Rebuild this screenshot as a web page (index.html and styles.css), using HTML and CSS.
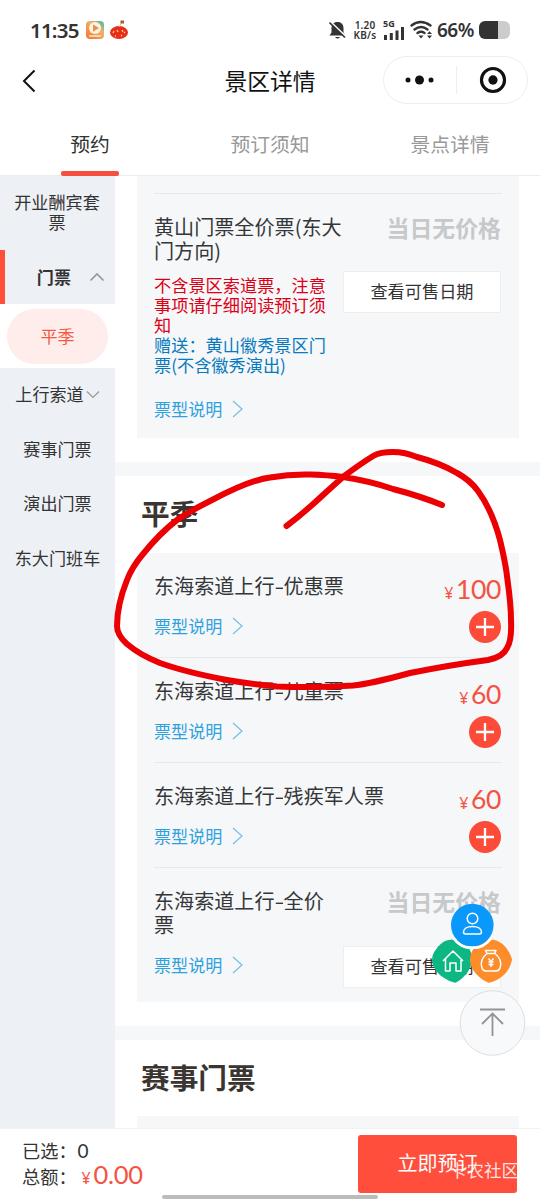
FILE: index.html
```
<!DOCTYPE html>
<html lang="zh-CN">
<head>
<meta charset="utf-8">
<title>景区详情</title>
<link rel="stylesheet" href="styles.css">
</head>
<body>
<div class="app">
  <div class="status">
    <span class="clock">11:35</span>
    <svg class="apps" width="44" height="22" viewBox="0 0 44 22">
      <defs><linearGradient id="app" x1="1" y1="0" x2="0.2" y2="1"><stop offset="0" stop-color="#35b9ad"/><stop offset=".4" stop-color="#e9b56b"/><stop offset="1" stop-color="#f47a38"/></linearGradient></defs>
      <rect x="1" y="2" width="18" height="18" rx="4" fill="url(#app)"/>
      <circle cx="10" cy="9" r="6" fill="#fff3dd"/><path d="M8 5.500l6 3.500-6 3.800z" fill="#ee8e4c"/><path d="M4 17h12" stroke="#ffe6cf" stroke-width="1.500"/>
      <ellipse cx="34" cy="13.500" rx="9" ry="6.500" fill="#e62e16"/><path d="M34 8l3-5" stroke="#f6b69a" stroke-width="1"/><rect x="35.500" y="1.500" width="3.500" height="3" fill="#b8552b"/>
      <path d="M28 14l1-2M32 11l1 2M37 11l1 2M40 14l-1-1M30 17h1M36 17l1-1" stroke="#ffc49c" stroke-width="1.300"/>
    </svg>
    <span class="grow"></span>
    <svg class="bell" width="18" height="20" viewBox="0 0 18 20"><path d="M.5 15.500h16l-2-3V8c0-3-2-5.500-4.500-6h-3C4.500 2.500 2.500 5 2.500 8v4.500zM6 17h5q-2.500 3-5 0z" fill="#333"/><path d="M1 1.500l17 16" stroke="#fff" stroke-width="1.800"/><path d="M.5 2.500l15.500 15" stroke="#333" stroke-width="1.600"/></svg>
    <span class="speed">1.20<br>KB/s</span>
    <span class="signal"><b>5G</b><svg width="21" height="13" viewBox="0 0 21 13"><path d="M2.500 8v5M8.300 6v7M14 3.500v9.500M19.500 0v13" stroke="#333" stroke-width="3"/></svg></span>
    <svg class="wifi" width="23" height="20" viewBox="0 0 23 20"><g fill="none" stroke="#333" stroke-width="2.300" stroke-linecap="round"><path d="M1.500 5.500q9-7 19 0M4.500 9.500q6.500-5 13 0M7.500 13q3.500-2.500 7 0"/></g><path d="M8.500 15.500h5L11 18.500zM17 14h5l-2.500-2.700zM17 15.500h5l-2.500 3z" fill="#333"/></svg>
    <span class="percent">66%</span>
    <span class="battery"></span>
  </div>
  <div class="nav">
    <svg class="back" width="14" height="24" viewBox="0 0 14 24"><path d="M12.500 1.500L2 12l10.500 10.500" fill="none" stroke="#111" stroke-width="2"/></svg>
    <h1 class="title">景区详情</h1>
    <div class="capsule">
      <svg width="72" height="46" viewBox="0 0 72 46"><circle cx="24" cy="23" r="2.500"/><circle cx="35.500" cy="23" r="4.500"/><circle cx="47" cy="23" r="2.500"/></svg>
      <svg class="close" width="71" height="46" viewBox="0 0 71 46"><circle cx="36.500" cy="23" r="11.700" fill="none" stroke="#111" stroke-width="3.200"/><circle cx="36.500" cy="23" r="4.700"/></svg>
    </div>
  </div>
  <div class="tabs"><div class="tab active"><span>预约</span></div><div class="tab"><span>预订须知</span></div><div class="tab"><span>景点详情</span></div></div>
  <div class="main">
    <div class="side">
      <div class="cat first">开业酬宾套票</div>
      <div class="cat current"><span>门票</span><svg width="16" height="10" viewBox="0 0 16 10"><path d="M1.500 8.500L8 2l6.500 6.500"/></svg></div>
      <div class="sub"><div class="pill">平季</div></div>
      <div class="cat row"><span>上行索道</span><svg width="14" height="9" viewBox="0 0 14 9"><path d="M1 1.500l6 6 6-6"/></svg></div>
      <div class="cat row">赛事门票</div>
      <div class="cat row">演出门票</div>
      <div class="cat row">东大门班车</div>
    </div>
    <div class="content">
      <div class="card top">
        <div class="item long">
          <div class="info"><div class="name">黄山门票全价票(东大门方向)</div>
            <div class="note"><div class="red">不含景区索道票，注意事项请仔细阅读预订须知</div><div class="blue">赠送：黄山徽秀景区门票(不含徽秀演出)</div></div>
            <div class="link">票型说明<svg width="12" height="18" viewBox="0 0 12 18"><path d="M1 1l9 8-9 8"/></svg></div></div>
          <div class="buy"><div class="none">当日无价格</div><div class="dates">查看可售日期</div></div>
        </div>
      </div>
      <div class="band"></div>
      <h2 class="heading season">平季</h2>
      <div class="card">
        <div class="item">
          <div class="info"><div class="name">东海索道上行<i>-</i>优惠票</div><div class="link">票型说明<svg width="12" height="18" viewBox="0 0 12 18"><path d="M1 1l9 8-9 8"/></svg></div></div>
          <div class="buy"><div class="price"><small>¥</small>100</div><svg class="plus" width="32" height="32" viewBox="0 0 32 32"><circle cx="16" cy="16" r="16"/><path d="M7 16h18M16 7v18"/></svg></div>
        </div>
        <div class="item">
          <div class="info"><div class="name">东海索道上行<i>-</i>儿童票</div><div class="link">票型说明<svg width="12" height="18" viewBox="0 0 12 18"><path d="M1 1l9 8-9 8"/></svg></div></div>
          <div class="buy"><div class="price"><small>¥</small>60</div><svg class="plus" width="32" height="32" viewBox="0 0 32 32"><circle cx="16" cy="16" r="16"/><path d="M7 16h18M16 7v18"/></svg></div>
        </div>
        <div class="item">
          <div class="info"><div class="name wide">东海索道上行<i>-</i>残疾军人票</div><div class="link">票型说明<svg width="12" height="18" viewBox="0 0 12 18"><path d="M1 1l9 8-9 8"/></svg></div></div>
          <div class="buy"><div class="price"><small>¥</small>60</div><svg class="plus" width="32" height="32" viewBox="0 0 32 32"><circle cx="16" cy="16" r="16"/><path d="M7 16h18M16 7v18"/></svg></div>
        </div>
        <div class="item tall">
          <div class="info"><div class="name narrow">东海索道上行<i>-</i>全价票</div><div class="link">票型说明<svg width="12" height="18" viewBox="0 0 12 18"><path d="M1 1l9 8-9 8"/></svg></div></div>
          <div class="buy"><div class="none">当日无价格</div><div class="dates">查看可售日期</div></div>
        </div>
      </div>
      <div class="band"></div>
      <h2 class="heading">赛事门票</h2>
      <div class="card rest"></div>
    </div>
  </div>
  <div class="footer">
    <div class="totals"><div>已选：<span class="count">0</span></div><div>总额：<span class="sum"><small>¥</small>0.00</span></div></div>
    <div class="book">立即预订</div>
  </div>
  <div class="homebar"></div>
  <div class="watermark">卡农社区</div>
  <svg class="float" width="110" height="160" viewBox="430 900 110 160">
    <defs><mask id="cut"><rect x="430" y="900" width="110" height="160" fill="#fff"/><circle cx="472.300" cy="925" r="21.300" fill="#000"/></mask></defs>
    <path d="M453 939.500c12 0 19 9 19 20 0 9-8 19-16 23q-1 .3-2 0c-20-6-27-23-18-33 4-6 9-10 17-10z" fill="#0cb783"/>
    <path d="M490 939.500c11 0 19 9 22 20-2 12-11 20-22 23q-1 .3-2 0c-8-3-18-13-18-22 0-11 9-21 20-21z" fill="#fd8c2a"/>
    <path d="M453.500 938a22.800 22.800 0 0 0 37.600 0" fill="none" stroke="#fff" stroke-width="3" mask="url(#cut)"/>
    <circle cx="472.300" cy="925" r="21.300" fill="#0a98fb"/>
    <g fill="none" stroke="#fff" stroke-width="1.500" stroke-linejoin="round"><circle cx="472.500" cy="918.500" r="5.300"/><path d="M463.500 932c0-3.500 4-5.500 9-5.500s9 2 9 5.500q0 2-2 2h-14q-2 0-2-2z"/>
    <path d="M443 961l10-10 10 10M445.500 958.500v12.500h4.500v-8h6v8h5v-12.500"/>
    <path d="M487 953.500l-1.500-3h10.500l-1.500 3zM487 953.500c-5 4-7 9-5 14.500q1 3 4 3h10q3 0 4-3c2-5.500 0-10.500-5-14.500"/><path d="M488.500 958.500l2.500 3 2.500-3M491 961.500v5.500M488.500 962h5M488.500 964.500h5"/></g>
    <circle cx="492.500" cy="1023" r="32.300" fill="#f8f9fb" fill-opacity=".95" stroke="#dddee1"/>
    <path d="M480 1009.500h25M492.500 1036v-22M482 1024l10.500-10.500 10.500 10.500" fill="none" stroke="#929396" stroke-width="1.800"/>
  </svg>
  <svg class="scribble" width="540" height="300" viewBox="0 430 540 300"><path d="M286.500 526Q305 512 323 495Q334 485 343 477Q360 464 374 455.500Q380 452 393 452Q405 452 417 457Q440 463 457 473Q470 480 478 491Q492 510 500 540Q506 565 507.500 580Q511 605 511 620Q512 640 507 648Q503 657 488 660Q450 665 410 673Q370 684 353 685.500Q315 688 277 686.500Q250 684 227 680Q185 672 160 663Q140 655 127 644Q117 635 117 626Q117 605 127 580Q132 567 143 554Q160 533 177 520Q190 511 212 500Q250 480 270 477.500Q290 474 310 474.500Q328 475 343 477Q370 481 393 489Q420 496 442 505" fill="none" stroke="#eb0003" stroke-width="6" stroke-linecap="round" stroke-linejoin="round"/></svg>
</div>
</body>
</html>
```
FILE: styles.css
```
* { box-sizing: border-box; }
body { margin: 0; font-family: "Noto Sans CJK SC", sans-serif; color: #333; background: #fff; }
svg { display: block; flex: none; }
.app { position: relative; width: 540px; height: 1200px; overflow: hidden; display: flex; flex-direction: column; background: #fff; }
.status { height: 56px; padding: 4px 30px 0; display: flex; align-items: center; flex: none; }
.clock { font: 600 20.5px "Noto Sans", sans-serif; width: 55px; white-space: nowrap; letter-spacing: -.8px; }
.apps { margin-top: -1px; }
.grow { flex: 1; }
.bell { margin-right: 6px; }
.speed { font: 600 10px/10px "Noto Sans", sans-serif; width: 24px; text-align: center; letter-spacing: .2px; white-space: nowrap; margin-right: 6px; }
.signal { width: 23px; margin-right: 4px; }
.signal b { display: block; font: 700 9px/8px "Noto Sans", sans-serif; }
.signal svg { margin-top: -1px; }
.wifi { margin-right: 4px; }
.percent { font: 600 19px "Noto Sans", sans-serif; width: 39px; letter-spacing: -.5px; white-space: nowrap; margin-right: 3px; }
.battery { width: 31px; height: 18px; border-radius: 6px; background: linear-gradient(90deg, #333 0 19px, #ccc 19px); }
.nav { height: 48px; display: grid; grid-template-columns: 157px 1fr 157px; align-items: center; flex: none; }
.back { margin: 1px 0 0 22px; }
.title { margin: 0; font-size: 22.8px; line-height: 46px; font-weight: 400; text-align: center; color: #111; padding-top: 1px; }
.capsule { display: flex; width: 145px; height: 48px; border: 1px solid #eee; border-radius: 24px; fill: #111; }
.close { border-left: 1px solid #eee; border-image: linear-gradient(transparent 20%, #eee 20% 80%, transparent 80%) 1; }
.tabs { display: grid; grid-template-columns: repeat(3, 1fr); height: 72px; border-bottom: 1px solid #ebecf0; flex: none; }
.tab { display: flex; flex-direction: column; align-items: center; color: #999; font-size: 19.8px; line-height: 30px; padding-top: 25px; }
.tab.active { color: #333; }
.tab.active::after { content: ""; width: 58px; height: 5px; border-radius: 2px; background: #f5503f; margin-top: 12px; }
.main { height: 952px; display: grid; grid-template-columns: 115px 1fr; overflow: hidden; flex: none; }
.side { background: #edf0f5; font-size: 17.1px; text-align: center; }
.cat { line-height: 20px; }
.cat.first { height: 74px; padding: 16px 15px 0 14px; }
.current { height: 54px; border-left: 5px solid #ff4e3c; display: flex; align-items: center; justify-content: flex-end; padding-right: 10px; gap: 18px; font-weight: 700; }
.current svg, .row svg { fill: none; stroke: #96989d; stroke-width: 1.7; }
.sub { height: 64px; background: #fff; padding: 5px 7px 4px; }
.pill { height: 55px; border-radius: 28px; background: #ffedec; color: #f15b43; line-height: 54px; }
.row { height: 54.5px; display: flex; align-items: center; justify-content: center; gap: 2px; padding-bottom: 2px; }
.row svg { stroke-width: 1.2; }
.content { overflow: hidden; }
.card { margin: 0 21px 0 22px; padding: 0 17px; background: #f6f7f9; }
.card.top { padding-top: 17px; height: 262px; }
.item { height: 105px; padding: 21px 1px 0 0; display: flex; justify-content: space-between; border-bottom: 1px solid #e6e8eb; }
.item.long { height: 245px; border-top: 1px solid #e6e8eb; border-bottom: 0; padding-top: 21px; }
.item.tall { height: 134px; border-bottom: 0; }
.info { width: 189px; }
.name { width: 192px; font-size: 20.1px; line-height: 24px; color: #353638; }
.name i { display: inline-block; font-style: normal; width: 9px; transform: scaleX(1.4); text-align: center; }
.name.wide { width: 235px; }
.name.narrow { width: 180px; }
.note { width: 175px; margin-top: 12px; font-size: 17.2px; line-height: 20px; }
.red { color: #dc0016; }
.blue { color: #087abd; }
.link { display: flex; align-items: center; gap: 10px; margin-top: 15.5px; font-size: 17.1px; line-height: 24px; color: #30a1df; }
.link svg { fill: none; stroke: #77bde5; stroke-width: 1.2; }
.long .link { margin-top: 22px; }
.buy { display: flex; flex-direction: column; align-items: flex-end; }
.none { font-size: 22.9px; line-height: 26px; font-weight: 700; color: #c7c8ca; margin-top: -1px; }
.dates { width: 158px; height: 42px; margin-top: 32px; background: #fff; border: 1px solid #eceef0; font-size: 17.2px; line-height: 38px; text-align: center; white-space: nowrap; }
.long .dates { margin-top: 31px; }
.price { font: 400 26.5px/30px Lato, sans-serif; color: #f45343; white-space: nowrap; letter-spacing: -.4px; }
.price small, .sum small { font: 400 16px "Noto Sans", sans-serif; margin-right: 3px; }
.plus { margin-top: 7px; fill: #fd4b39; stroke-width: 2.3; stroke: none; }
.plus path { stroke: #fff; }
.band { height: 14px; margin-top: 24px; background: #f6f7f9; }
.heading { margin: 0; padding-left: 26px; height: 76px; line-height: 73px; font-size: 28.7px; font-weight: 700; color: #3b3532; }
.heading.season { height: 77px; }
.rest { height: 30px; }
.footer { height: 72px; border-top: 1px solid #f2f2f3; background: #fff; padding: 6px 23px 0 22px; display: flex; justify-content: space-between; flex: none; }
.totals { font-size: 18.2px; line-height: 24px; padding-top: 3px; }
.totals > div { height: 24px; white-space: nowrap; }
.count { font-family: Lato, sans-serif; font-size: 19px; margin-left: 1px; }
.sum { font-family: Lato, sans-serif; font-size: 25.5px; color: #f45343; margin-left: 5px; letter-spacing: -.3px; }
.book { width: 159px; height: 58px; border-radius: 3px; background: #ff4e3c; color: #fff; font-size: 20px; line-height: 56px; text-align: center; }
.homebar { position: absolute; left: 162px; top: 1195px; width: 216px; height: 4px; border-radius: 2px; background: #bbb; }
.watermark { position: absolute; left: 449px; top: 1158px; font-size: 17.5px; line-height: 24px; color: rgba(255,255,255,.85); white-space: nowrap; }
.float { position: absolute; left: 430px; top: 900px; }
.scribble { position: absolute; left: 0; top: 430px; }
```
